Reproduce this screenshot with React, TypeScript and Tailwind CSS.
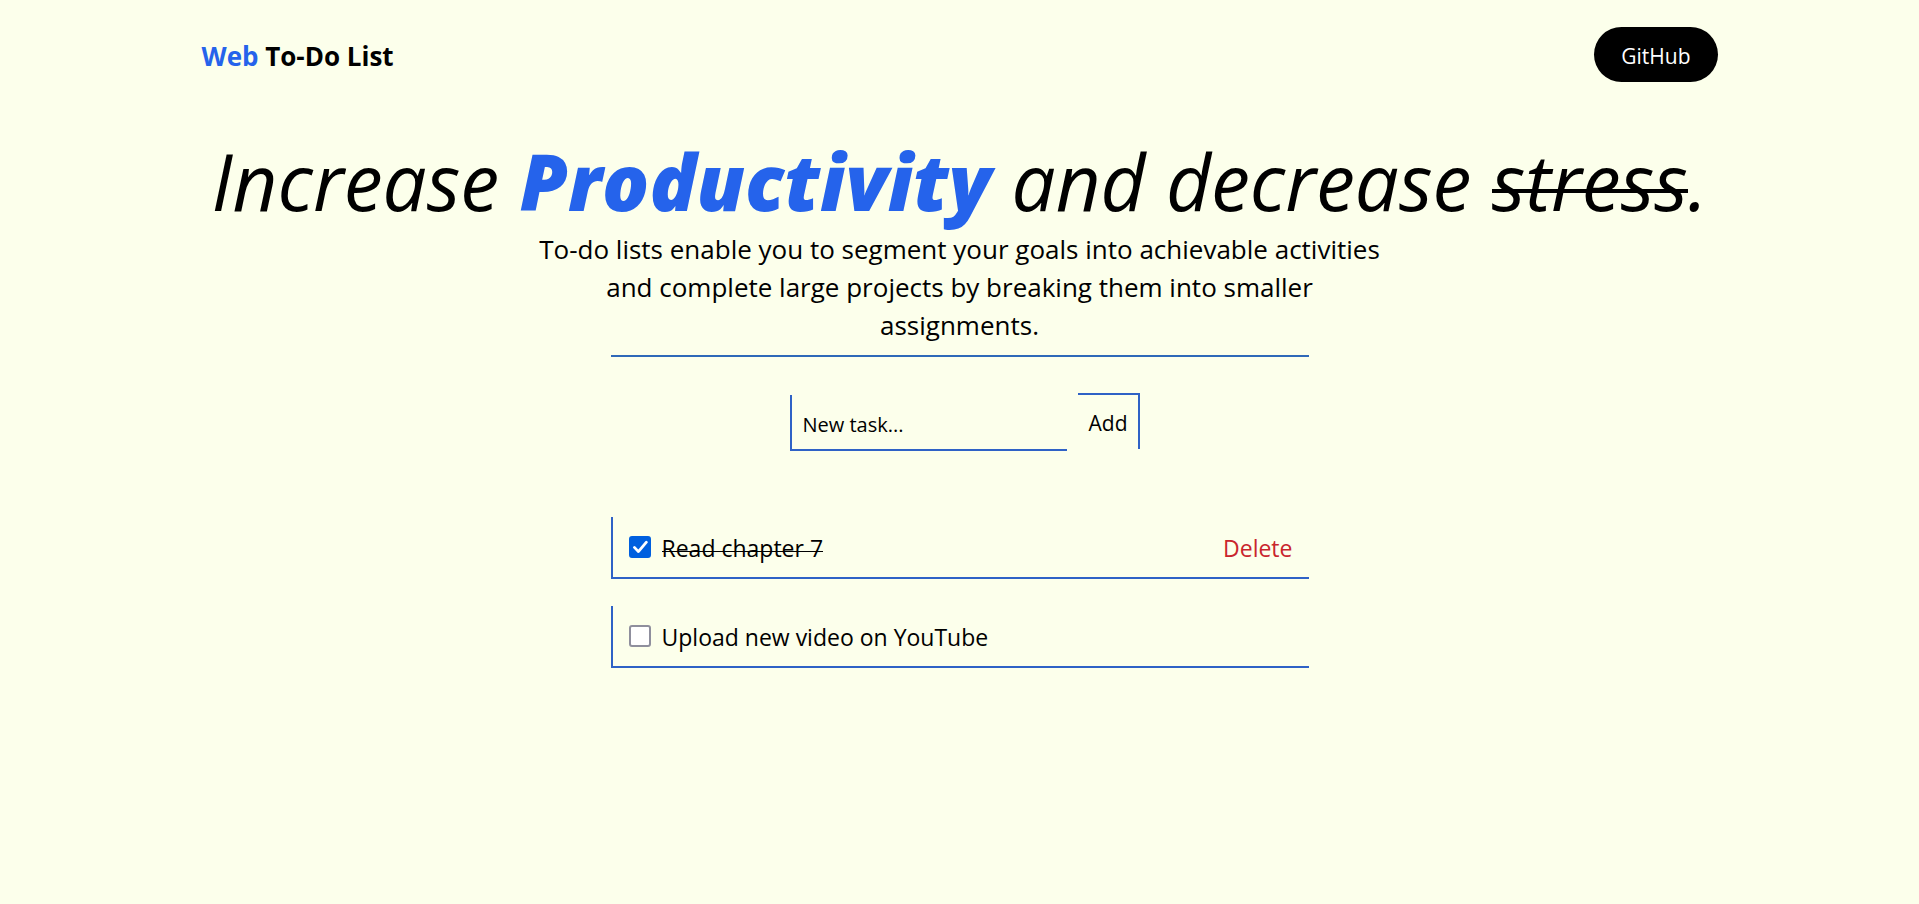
import { useState } from "react";
import type { FormEvent } from "react";

type Task = { id: number; title: string; done: boolean };

const initialTasks: Task[] = [
  { id: 1, title: "Read chapter 7", done: true },
  { id: 2, title: "Upload new video on YouTube", done: false },
];

function Header() {
  return (
    <header className="flex items-center justify-between">
      <a href="#" className="pt-[2px] text-[26px] leading-9 font-bold">
        <span className="text-[#2563eb]">Web</span> To-Do List
      </a>
      <a
        href="https://github.com"
        className="rounded-full bg-black px-[27px] pt-[13px] pb-[9px] text-[21px] leading-[33px] text-white"
      >
        GitHub
      </a>
    </header>
  );
}

function Hero() {
  return (
    <section className="mt-[58px] flex flex-col items-center text-center">
      <h1 className="text-[78px] leading-[82px] whitespace-nowrap italic">
        Increase <strong className="font-extrabold text-[#2563eb]">Productivity</strong> and decrease{" "}
        <s className="relative no-underline after:absolute after:inset-x-0 after:top-[58%] after:h-1 after:bg-black">
          stress
        </s>
        .
      </h1>
      <p className="mt-2 max-w-[850px] text-[26px] leading-[38px]">
        To-do lists enable you to segment your goals into achievable activities and complete large
        projects by breaking them into smaller assignments.
      </p>
    </section>
  );
}

function TaskRow({ task, onToggle, onDelete }: { task: Task; onToggle: () => void; onDelete: () => void }) {
  const id = `task-${task.id}`;
  return (
    <li className="flex h-[62px] items-center border-b-2 border-l-2 border-[#2f62c6] px-4 text-[23px] leading-9">
      <span className="relative mr-[11px] flex size-[22px]">
        <input
          id={id}
          type="checkbox"
          checked={task.done}
          onChange={onToggle}
          className="size-[22px] appearance-none rounded-[3px] border-2 border-[#8f8f9d] bg-white checked:border-[#0060df] checked:bg-[#0060df]"
        />
        {task.done && (
          <svg
            viewBox="0 0 22 22"
            className="pointer-events-none absolute inset-0 size-[22px]"
            fill="none"
            stroke="white"
            strokeWidth="2.8"
            strokeLinecap="round"
            strokeLinejoin="round"
            aria-hidden="true"
          >
            <path d="M5.4 11.4 9.4 15.6 17.4 6.2" />
          </svg>
        )}
      </span>
      <label
        htmlFor={id}
        className={
          task.done
            ? "relative pt-[2px] after:absolute after:inset-x-0 after:top-[61%] after:h-px after:bg-black"
            : "pt-[2px]"
        }
      >
        {task.title}
      </label>
      {task.done && (
        <button type="button" onClick={onDelete} className="ml-auto pt-[2px] text-[#c9252d]">
          Delete
        </button>
      )}
    </li>
  );
}

export default function App() {
  const [tasks, setTasks] = useState(initialTasks);
  const [title, setTitle] = useState("");

  const addTask = (event: FormEvent) => {
    event.preventDefault();
    if (!title.trim()) return;
    setTasks([...tasks, { id: Date.now(), title: title.trim(), done: false }]);
    setTitle("");
  };

  return (
    <div className="min-h-screen bg-[#fcffeb] font-['Open_Sans','Noto_Sans',sans-serif] text-black">
      <div className="mx-auto max-w-[1516px] pt-[27px]">
        <Header />
        <Hero />
        <main className="mx-auto mt-[11px] max-w-[698px] border-t-2 border-[#2f69b8] pt-9">
          <form onSubmit={addTask} className="flex items-start justify-center gap-[11px] pl-[11px]">
            <input
              type="text"
              aria-label="New task"
              placeholder="New task..."
              value={title}
              onChange={(event) => setTitle(event.target.value)}
              className="mt-0.5 h-14 w-[277px] border-b-2 border-l-2 border-[#2f62c6] bg-transparent px-[11px] pt-1 text-xl outline-none placeholder:text-black"
            />
            <button
              type="submit"
              className="h-14 border-t-2 border-r-2 border-[#2f62c6] px-[11px] pt-1 text-[21px]"
            >
              Add
            </button>
          </form>
          <ul className="mt-[66px] flex flex-col gap-[27px]">
            {tasks.map((task) => (
              <TaskRow
                key={task.id}
                task={task}
                onToggle={() => setTasks(tasks.map((t) => (t.id === task.id ? { ...t, done: !t.done } : t)))}
                onDelete={() => setTasks(tasks.filter((t) => t.id !== task.id))}
              />
            ))}
          </ul>
        </main>
      </div>
    </div>
  );
}
